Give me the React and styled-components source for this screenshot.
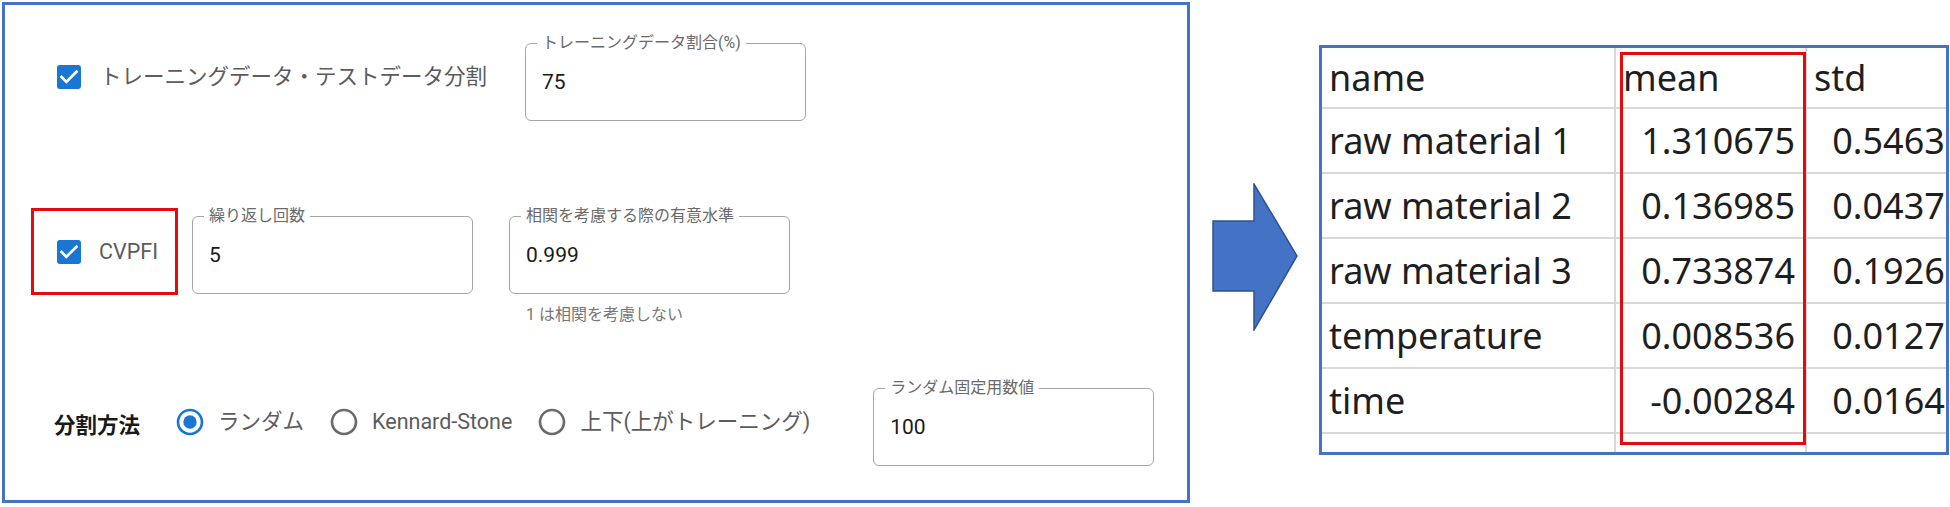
import React from 'react';
import styled, { createGlobalStyle } from 'styled-components';

const blue = '#1976d2';
const frame = '#4472c4';

const GlobalStyle = createGlobalStyle`
  html, body {
    margin: 0;
    padding: 0;
    background: #fff;
  }
  body {
    font-family: Roboto, "Noto Sans CJK JP", sans-serif;
  }
`;

const Page = styled.div`
  display: flex;
  align-items: flex-start;
  width: 1950px;
  height: 507px;
  padding: 2px 0 0 2px;
  box-sizing: border-box;
  overflow: hidden;
`;

/* ---------- left: settings form ---------- */

const Panel = styled.section`
  box-sizing: border-box;
  flex: none;
  width: 1188px;
  height: 501px;
  border: 3px solid ${frame};
  padding: 38px 0 0 26px;
  display: flex;
  flex-direction: column;
`;

const Row = styled.div`
  display: flex;
  align-items: ${({ $align }) => $align || 'center'};
  margin-top: ${({ $top }) => $top || 0}px;
  padding-left: ${({ $indent }) => $indent || 0}px;
`;

const CheckLabel = styled.label`
  display: flex;
  align-items: center;
  gap: ${({ $gap }) => $gap || 15}px;
  margin-bottom: ${({ $lift }) => $lift || 0}px;
  font-size: 21.5px;
  line-height: 26px;
  color: #5c5c5c;
  white-space: nowrap;
`;

const Highlight = styled.div`
  box-sizing: border-box;
  width: 147px;
  height: 87px;
  border: 3px solid #e30b0b;
  padding-left: 19px;
  display: flex;
  align-items: center;
`;

const Field = styled.div`
  box-sizing: border-box;
  flex: none;
  width: 281px;
  height: 78px;
  border: 1.5px solid #a6a6a6;
  border-radius: 6px;
  padding: 0 16px;
  margin-left: ${({ $left }) => $left || 0}px;
  margin-top: ${({ $top }) => $top || 0}px;
`;

const FieldLabel = styled.span`
  display: block;
  width: fit-content;
  margin: -9px 0 0 -5px;
  padding: 0 5px;
  background: #fff;
  font-size: 16px;
  line-height: 16px;
  color: #6a6a6a;
  white-space: nowrap;
`;

const FieldValue = styled.div`
  margin-top: 19px;
  font-size: 21px;
  line-height: 24px;
  color: #1a1a1a;
`;

const FieldColumn = styled.div`
  display: flex;
  flex-direction: column;
  margin-left: ${({ $left }) => $left || 0}px;
  margin-top: ${({ $top }) => $top || 0}px;
`;

const Helper = styled.div`
  margin-top: 11px;
  padding-left: 17px;
  font-size: 16px;
  line-height: 20px;
  color: #777;
`;

const GroupTitle = styled.div`
  font-size: 21.5px;
  font-weight: 700;
  line-height: 26px;
  color: #1a1a1a;
  margin-bottom: 2px;
`;

const RadioGroup = styled.div`
  display: flex;
  align-items: center;
  margin-left: 34px;
  margin-bottom: 10px;
`;

const RadioOption = styled.label`
  display: flex;
  align-items: center;
  gap: 12px;
  margin-right: ${({ $last }) => ($last ? 0 : 24)}px;
  font-size: 21.5px;
  line-height: 26px;
  color: #5c5c5c;
  white-space: nowrap;
`;

const CheckIcon = () => (
  <svg width="32" height="32" viewBox="0 0 24 24">
    <path
      fill={blue}
      d="M19 3H5c-1.11 0-2 .9-2 2v14c0 1.1.89 2 2 2h14c1.11 0 2-.9 2-2V5c0-1.1-.89-2-2-2zm-9 14l-5-5 1.41-1.41L10 14.17l7.59-7.59L19 8l-9 9z"
    />
  </svg>
);

const RadioIcon = ({ checked }) => (
  <svg width="32" height="32" viewBox="0 0 24 24">
    <path
      fill={checked ? blue : '#6b6b6b'}
      d="M12 2C6.48 2 2 6.48 2 12s4.48 10 10 10 10-4.48 10-10S17.52 2 12 2zm0 18c-4.42 0-8-3.58-8-8s3.58-8 8-8 8 3.58 8 8-3.58 8-8 8z"
    />
    {checked && <circle cx="12" cy="12" r="5" fill={blue} />}
  </svg>
);

const TextField = ({ label, value, left, top }) => (
  <Field $left={left} $top={top}>
    <FieldLabel>{label}</FieldLabel>
    <FieldValue>{value}</FieldValue>
  </Field>
);

/* ---------- arrow ---------- */

const Arrow = styled.svg`
  flex: none;
  margin: 181px 0 0 22px;
`;

/* ---------- right: table excerpt ---------- */

const TableFrame = styled.div`
  position: relative;
  flex: none;
  box-sizing: border-box;
  width: 630px;
  height: 410px;
  margin: 43px 0 0 21px;
  border: 3px solid ${frame};
  overflow: hidden;
`;

const Grid = styled.div`
  display: grid;
  grid-template-columns: 294px 191px 191px;
  grid-template-rows: 61px repeat(6, 65px);
`;

const Cell = styled.div`
  box-sizing: border-box;
  display: flex;
  align-items: center;
  justify-content: ${({ $num }) => ($num ? 'flex-end' : 'flex-start')};
  padding: ${({ $num }) => ($num ? '0 10px 0 0' : '0 0 0 7px')};
  border-right: 2px solid #d8d8d8;
  border-bottom: 2px solid #d8d8d8;
  font-family: "Noto Sans", "Liberation Sans", sans-serif;
  font-size: 36px;
  line-height: 1;
  color: #1e1e1e;
  white-space: nowrap;
`;

const ColumnMark = styled.div`
  position: absolute;
  left: 298px;
  top: 4px;
  width: 186px;
  height: 393px;
  box-sizing: border-box;
  border: 3px solid #e30b0b;
  pointer-events: none;
`;

const rows = [
  ['raw material 1', '1.310675', '0.546306'],
  ['raw material 2', '0.136985', '0.043759'],
  ['raw material 3', '0.733874', '0.192671'],
  ['temperature', '0.008536', '0.012725'],
  ['time', '-0.00284', '0.016406'],
  ['', '', ''],
];

const App = () => (
  <>
    <GlobalStyle />
    <Page>
      <Panel>
        <Row $indent={22}>
          <CheckLabel $lift={11}>
            <CheckIcon />
            トレーニングデータ・テストデータ分割
          </CheckLabel>
          <TextField label="トレーニングデータ割合(%)" value="75" left={38} />
        </Row>

        <Row $align="flex-start" $top={87}>
          <Highlight>
            <CheckLabel $gap={14}>
              <CheckIcon />
              CVPFI
            </CheckLabel>
          </Highlight>
          <TextField label="繰り返し回数" value="5" left={14} top={8} />
          <FieldColumn $left={36} $top={8}>
            <TextField label="相関を考慮する際の有意水準" value="0.999" />
            <Helper>1 は相関を考慮しない</Helper>
          </FieldColumn>
        </Row>

        <Row $top={63} $indent={23}>
          <GroupTitle>分割方法</GroupTitle>
          <RadioGroup>
            <RadioOption>
              <RadioIcon checked />
              ランダム
            </RadioOption>
            <RadioOption>
              <RadioIcon />
              Kennard-Stone
            </RadioOption>
            <RadioOption $last>
              <RadioIcon />
              上下(上がトレーニング)
            </RadioOption>
          </RadioGroup>
          <TextField label="ランダム固定用数値" value="100" left={63} />
        </Row>
      </Panel>

      <Arrow width="86" height="148" viewBox="-1 -1 86 148">
        <polygon
          points="0,37 41,37 41,0 84,72 41,146 41,107 0,107"
          fill={frame}
          stroke="#2f528f"
          strokeWidth="1.5"
          strokeLinejoin="miter"
        />
      </Arrow>

      <TableFrame>
        <Grid>
          <Cell>name</Cell>
          <Cell>mean</Cell>
          <Cell>std</Cell>
          {rows.map((r, i) => (
            <React.Fragment key={i}>
              <Cell>{r[0]}</Cell>
              <Cell $num>{r[1]}</Cell>
              <Cell $num>{r[2]}</Cell>
            </React.Fragment>
          ))}
        </Grid>
        <ColumnMark />
      </TableFrame>
    </Page>
  </>
);

export default App;
